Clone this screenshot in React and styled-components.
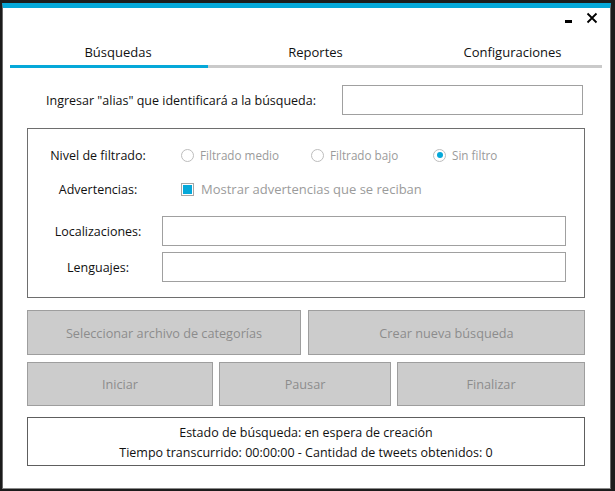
import styled, { createGlobalStyle } from "styled-components";

const GlobalStyle = createGlobalStyle`
  html, body { margin: 0; padding: 0; background: #1c1c1c; }
  body { font-family: "Open Sans", "Noto Sans", sans-serif; }
`;

const ACCENT = "#05a8d9";

function App() {
  return (
    <>
      <GlobalStyle />
      <Window>
        <TitleBar>
          <WinButton aria-label="minimizar">
            <svg width="12" height="12" viewBox="0 0 12 12">
              <rect x="2" y="8" width="7" height="3" fill="#000" />
            </svg>
          </WinButton>
          <WinButton aria-label="cerrar">
            <svg width="12" height="12" viewBox="0 0 12 12">
              <path d="M1.5 1.5 L10.5 10.5 M10.5 1.5 L1.5 10.5" stroke="#000" strokeWidth="1.8" />
            </svg>
          </WinButton>
        </TitleBar>
        <Tabs>
          <Tab active>Búsquedas</Tab>
          <Tab>Reportes</Tab>
          <Tab>Configuraciones</Tab>
        </Tabs>
        <Content>
          <AliasRow>
            <AliasLabel>Ingresar "alias" que identificará a la búsqueda:</AliasLabel>
            <TextBox width="241px" />
          </AliasRow>
          <GroupBox>
            <FieldRow>
              <FieldLabel>Nivel de filtrado:</FieldLabel>
              <Options>
                <Radio width="130px"><Dot /> Filtrado medio</Radio>
                <Radio width="122px"><Dot /> Filtrado bajo</Radio>
                <Radio><Dot checked /> Sin filtro</Radio>
              </Options>
            </FieldRow>
            <FieldRow top="8px">
              <FieldLabel>Advertencias:</FieldLabel>
              <Options>
                <Check><Box /> Mostrar advertencias que se reciban</Check>
              </Options>
            </FieldRow>
            <FieldRow top="14px" tall>
              <FieldLabel>Localizaciones:</FieldLabel>
              <TextBox grow />
            </FieldRow>
            <FieldRow top="6px" tall>
              <FieldLabel>Lenguajes:</FieldLabel>
              <TextBox grow />
            </FieldRow>
          </GroupBox>
          <ButtonRow top="12px" height="45px">
            <Button width="274px">Seleccionar archivo de categorías</Button>
            <Button>Crear nueva búsqueda</Button>
          </ButtonRow>
          <ButtonRow top="7px" height="44px" gap="6px">
            <Button width="186px">Iniciar</Button>
            <Button width="172px">Pausar</Button>
            <Button>Finalizar</Button>
          </ButtonRow>
          <Status>
            <span>Estado de búsqueda: en espera de creación</span>
            <span>Tiempo transcurrido: 00:00:00 - Cantidad de tweets obtenidos: 0</span>
          </Status>
        </Content>
      </Window>
    </>
  );
}
export default App;

const Window = styled.div`
  margin: 3px 0 0 2px;
  width: 607px;
  height: 480px;
  background: #fff;
  border-top: 5px solid ${ACCENT};
  border-left: 1px solid #6a6a6a;
  border-right: 1px solid #6a6a6a;
  border-bottom: 1px solid #8a8a8a;
  display: flex;
  flex-direction: column;
`;

const TitleBar = styled.div`
  height: 27px;
  flex: none;
  display: flex;
  justify-content: flex-end;
  align-items: flex-start;
  padding: 4px 12px 0 0;
  box-sizing: border-box;
  gap: 11px;
`;

const WinButton = styled.div`
  width: 12px;
  height: 12px;
  display: flex;
  align-items: center;
  justify-content: center;
`;

const Tabs = styled.div`
  margin: 0 8px 0 7px;
  display: grid;
  grid-template-columns: 198px 197px 1fr;
  height: 30px;
  flex: none;
  border-bottom: 3px solid #cacaca;
`;

const Tab = styled.div`
  font-size: 13px;
  color: #111;
  display: flex;
  align-items: center;
  justify-content: center;
  padding: 4px 0 0 18px;
  margin-bottom: -3px;
  border-bottom: 3px solid ${(p) => (p.active ? ACCENT : "transparent")};
`;

const Content = styled.div`
  padding: 0 25px 0 24px;
  display: flex;
  flex-direction: column;
`;

const AliasRow = styled.div`
  margin-top: 17px;
  height: 30px;
  display: flex;
  align-items: center;
  padding-left: 19px;
`;

const AliasLabel = styled.div`
  font-size: 12.5px;
  color: #111;
  margin-right: auto;
`;

const TextBox = styled.div`
  box-sizing: border-box;
  border: 1px solid #a0a0a0;
  background: #fff;
  height: 30px;
  width: ${(p) => p.width || "auto"};
  flex: ${(p) => (p.grow ? "1" : "none")};
  margin-right: 2px;
`;

const GroupBox = styled.div`
  margin-top: 13px;
  height: 170px;
  box-sizing: border-box;
  border: 1px solid #6e6e6e;
  padding: 13px 16px 0 8px;
  display: flex;
  flex-direction: column;
`;

const FieldRow = styled.div`
  margin-top: ${(p) => p.top || "0"};
  height: ${(p) => (p.tall ? "30px" : "26px")};
  display: flex;
  align-items: center;
`;

const FieldLabel = styled.div`
  width: 124px;
  margin-right: 2px;
  text-align: center;
  font-size: 12.5px;
  color: #111;
  flex: none;
`;

const Options = styled.div`
  display: flex;
  align-items: center;
  padding-left: 19px;
`;

const Radio = styled.div`
  display: flex;
  align-items: center;
  gap: 6px;
  font-size: 11.7px;
  color: #9b9b9b;
  width: ${(p) => p.width || "auto"};
`;

const Dot = styled.span`
  width: 11px;
  height: 11px;
  border-radius: 50%;
  border: 1px solid #bdbdbd;
  background: #fff;
  display: flex;
  align-items: center;
  justify-content: center;
  &::after {
    content: "";
    width: 6px;
    height: 6px;
    border-radius: 50%;
    background: ${(p) => (p.checked ? ACCENT : "transparent")};
  }
`;

const Check = styled.div`
  display: flex;
  align-items: center;
  gap: 7px;
  font-size: 13px;
  color: #9b9b9b;
`;

const Box = styled.span`
  width: 11px;
  height: 11px;
  border: 1px solid #a6a6a6;
  background: #fff;
  display: flex;
  align-items: center;
  justify-content: center;
  &::after {
    content: "";
    width: 9px;
    height: 9px;
    background: ${ACCENT};
  }
`;

const ButtonRow = styled.div`
  margin-top: ${(p) => p.top};
  height: ${(p) => p.height};
  display: flex;
  gap: ${(p) => p.gap || "7px"};
`;

const Button = styled.div`
  box-sizing: border-box;
  width: ${(p) => p.width || "auto"};
  flex: ${(p) => (p.width ? "none" : "1")};
  background: #cccccc;
  border: 1px solid #9e9e9e;
  color: #8c8c8c;
  font-size: 12.7px;
  display: flex;
  align-items: center;
  justify-content: center;
`;

const Status = styled.div`
  margin-top: 11px;
  height: 49px;
  box-sizing: border-box;
  border: 1px solid #5e5e5e;
  padding-top: 2px;
  display: flex;
  flex-direction: column;
  align-items: center;
  justify-content: center;
  gap: 2px;
  font-size: 12.5px;
  color: #111;
  line-height: 18px;
`;
